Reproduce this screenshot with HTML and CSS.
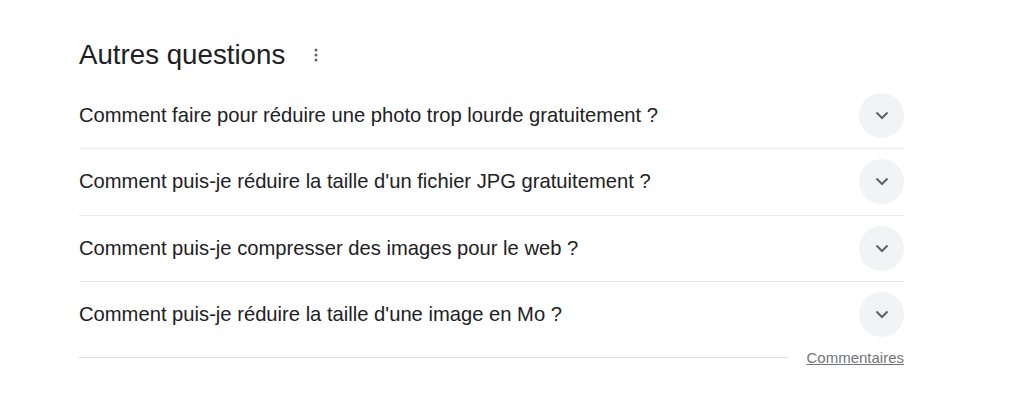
FILE: index.html
```html
<!DOCTYPE html>
<html lang="fr">
<head>
<meta charset="utf-8">
<link rel="stylesheet" href="styles.css">
</head>
<body>
<div class="panel">
  <div class="header">
    <h2 class="title">Autres questions</h2>
    <span class="menu" aria-label="Plus d'options">
      <svg width="4" height="14" viewBox="0 0 4 14"><circle cx="2" cy="2" r="1.5"/><circle cx="2" cy="7" r="1.5"/><circle cx="2" cy="12" r="1.5"/></svg>
    </span>
  </div>
  <div class="list">
    <div class="row"><span class="q">Comment faire pour réduire une photo trop lourde gratuitement ?</span><span class="toggle"><svg width="14" height="9" viewBox="0 0 14 9"><path d="M1.5 1.5 L7 7 L12.5 1.5" fill="none" stroke="#5f6368" stroke-width="2"/></svg></span></div>
    <div class="row"><span class="q">Comment puis-je réduire la taille d'un fichier JPG gratuitement ?</span><span class="toggle"><svg width="14" height="9" viewBox="0 0 14 9"><path d="M1.5 1.5 L7 7 L12.5 1.5" fill="none" stroke="#5f6368" stroke-width="2"/></svg></span></div>
    <div class="row"><span class="q">Comment puis-je compresser des images pour le web ?</span><span class="toggle"><svg width="14" height="9" viewBox="0 0 14 9"><path d="M1.5 1.5 L7 7 L12.5 1.5" fill="none" stroke="#5f6368" stroke-width="2"/></svg></span></div>
    <div class="row last"><span class="q">Comment puis-je réduire la taille d'une image en Mo ?</span><span class="toggle"><svg width="14" height="9" viewBox="0 0 14 9"><path d="M1.5 1.5 L7 7 L12.5 1.5" fill="none" stroke="#5f6368" stroke-width="2"/></svg></span></div>
  </div>
  <div class="footer">
    <span class="rule"></span>
    <a class="feedback" href="#">Commentaires</a>
  </div>
</div>
</body>
</html>
```

FILE: styles.css
```css
html, body {
  margin: 0;
  padding: 0;
  background: #ffffff;
}
body {
  font-family: "Liberation Sans", Arial, sans-serif;
  color: #202124;
}
.panel {
  width: 825px;
  margin-left: 79px;
  padding-top: 36px;
}
.header {
  display: flex;
  align-items: center;
  height: 38px;
  gap: 29px;
}
.title {
  margin: 0;
  font-size: 27.7px;
  font-weight: 400;
  line-height: 38px;
  color: #202124;
}
.menu {
  display: flex;
  align-items: center;
  fill: #5f6368;
}
.list {
  margin-top: 8.5px;
}
.row {
  display: flex;
  align-items: center;
  justify-content: space-between;
  height: 65.5px;
  border-bottom: 1px solid #e8eaed;
}
.row.last {
  border-bottom: none;
}
.q {
  font-size: 20.2px;
  color: #202124;
}
.toggle {
  width: 45px;
  height: 45px;
  border-radius: 50%;
  background: #f1f3f4;
  display: flex;
  align-items: center;
  justify-content: center;
}
.footer {
  display: flex;
  align-items: center;
  gap: 18px;
  margin-top: 1px;
}
.rule {
  flex: 1;
  height: 1px;
  background: #dadce0;
}
.feedback {
  font-size: 15px;
  color: #70757a;
  text-decoration: underline;
  line-height: 18px;
}
```
